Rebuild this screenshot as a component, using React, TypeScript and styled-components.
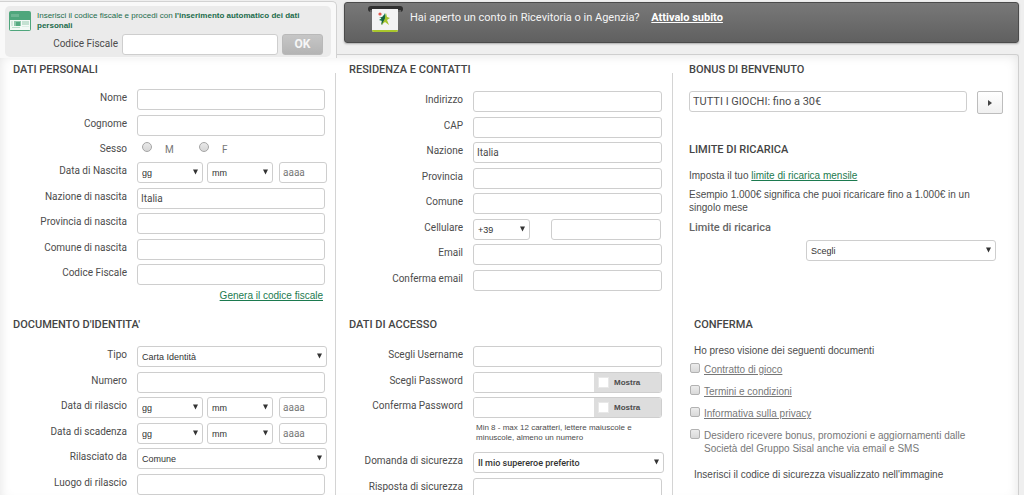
import React, { useId } from "react";
import styled, { createGlobalStyle, css } from "styled-components";

const GlobalStyle = createGlobalStyle`
  *, *::before, *::after { box-sizing: border-box; }
  html { scrollbar-width: none; }
  body {
    margin: 0;
    background: #efefef;
    color: #4c4c4c;
    font-family: Roboto, "Liberation Sans", sans-serif;
    font-size: 10px;
    line-height: 12px;
  }
  input, select, button { font-family: inherit; color: inherit; margin: 0; }
`;

const Page = styled.main`
  min-height: 100vh;
  display: flex;
  flex-direction: column;
`;

const TopBar = styled.header`
  display: grid;
  grid-template-columns: 337fr 682fr;
  align-items: start;
  padding-right: 5px;
`;

const CodeTab = styled.section`
  position: relative;
  height: 57px;
  margin: 1px 0 -4px;
  padding: 4px 5px 0;
  background: #f9f9f9;
  border: 1px solid #d2d2d2;
  border-width: 1px 1px 0 0;
  border-radius: 0 5px 0 0;
`;

const CodeBox = styled.form`
  display: grid;
  grid-template-columns: 22px 1fr;
  column-gap: 6px;
  height: 51px;
  padding: 5px 8px 0 4px;
  background: #ebebeb;
  border-radius: 5px;
`;

const CodeHint = styled.p`
  margin: 0;
  color: #1c6b4b;
  font-family: "Liberation Sans", sans-serif;
  font-size: 8px;
  line-height: 10px;
`;

const CodeLine = styled.div`
  grid-column: 1 / 3;
  display: flex;
  align-items: center;
  justify-content: flex-end;
  height: 21px;
  label { margin-right: 4px; }
`;

const OkButton = styled.button`
  width: 41px;
  height: 21px;
  margin-left: 4px;
  padding: 0;
  border: 1px solid #b9b9b9;
  border-radius: 3px;
  background: linear-gradient(#c6c6c6, #b4b4b4);
  color: #f6f6f6;
  font-size: 12px;
  font-weight: 700;
`;

const Banner = styled.aside`
  display: flex;
  align-items: flex-start;
  height: 41px;
  margin: 2px 0 0 7px;
  padding-left: 23px;
  color: #f4f4f4;
  font-size: 11px;
  line-height: 14px;
  background: linear-gradient(#787878, #606060);
  border: 1px solid #4b4b4b;
  border-radius: 3px;
  box-shadow: 0 1px 2px #aaa;
  p { margin: 8px 0 0 6px; }
  a { color: #fff; font-weight: 700; margin-left: 9px; }
`;

const Panel = styled.form`
  flex: 1;
  display: grid;
  grid-template-columns: minmax(0, 335fr) 1px minmax(0, 336fr) 1px minmax(0, 345fr);
  grid-template-rows: 255px auto;
  margin-right: 5px;
  padding-top: 8px;
  background: #fff;
  border: 1px solid #cfcfcf;
  border-width: 1px 1px 0 0;
  border-radius: 0 3px 0 0;
  box-shadow: inset 0 0 12px #e2e2e2;
`;

const Divider = styled.div<{ $column: number }>`
  grid-column: ${(p) => p.$column};
  grid-row: 1 / 3;
  margin-top: 10px;
  background: #d4d4d4;
`;

const Section = styled.section<{ $column: number; $row: number; $indent?: number }>`
  grid-column: ${(p) => p.$column};
  grid-row: ${(p) => p.$row};
  padding: 0 8px 0 ${(p) => p.$indent ?? 13}px;
`;

const Title = styled.h2<{ $gap?: number }>`
  margin: 0 0 ${(p) => p.$gap ?? 14}px;
  color: #444;
  font-size: 11px;
  font-weight: 500;
  line-height: 14px;
`;

const Fields = styled.div`
  & > :nth-child(odd) { height: 26px; }
  & > :nth-child(even) { height: 25px; }
`;

const Row = styled.div`
  display: grid;
  grid-template-columns: 114px minmax(0, 1fr);
  column-gap: 10px;
`;

const RowLabel = styled.label`
  text-align: right;
  line-height: 17px;
`;

const Controls = styled.div`
  display: flex;
  align-items: flex-start;
`;

const frame = css`
  height: 21px;
  background: #fff;
  border: 1px solid #cecece;
  border-radius: 3px;
`;

const TextBox = styled.input<{ $width?: number; $left?: number; $size?: number }>`
  ${frame}
  ${(p) => (p.$width ? `flex: 0 0 ${p.$width}px; width: ${p.$width}px;` : "flex: 1; min-width: 0; margin-right: 2px;")}
  ${(p) => p.$left && `margin-left: ${p.$left}px;`}
  padding: 0 3px;
  font-size: ${(p) => p.$size ?? 10}px;
  &::placeholder { color: #777; opacity: 1; }
`;

const SelectWrap = styled.div<{ $width?: number }>`
  position: relative;
  ${(p) => (p.$width ? `flex: 0 0 ${p.$width}px;` : "flex: 1;")}
  svg { position: absolute; right: 5px; top: 7px; pointer-events: none; }
`;

const NativeSelect = styled.select<{ $strong?: boolean }>`
  ${frame}
  display: block;
  width: 100%;
  padding: 0 14px 0 4px;
  appearance: none;
  color: #333;
  font-family: ${(p) => (p.$strong ? "Roboto" : '"Liberation Sans"')}, sans-serif;
  font-size: 9px;
  font-weight: ${(p) => (p.$strong ? 500 : 400)};
`;

const SexRow = styled(Row)`
  height: 22px;
`;

const Radio = styled.input`
  appearance: none;
  width: 10px;
  height: 10px;
  border: 1px solid #a5a5a5;
  border-radius: 50%;
  background: linear-gradient(#e9e9e9, #d6d6d6);
`;

const RadioLabel = styled.label`
  width: 47px;
  padding: 3px 0 0 13px;
  color: #777;
  line-height: 14px;
`;

const Radios = styled.div`
  display: flex;
  padding-left: 5px;
  ${Radio} { margin-top: 2px; }
`;

const GreenLink = styled.a`
  color: #1c7a4f;
`;

const GenerateLine = styled.div`
  padding-right: 4px;
  text-align: right;
  font-family: "Liberation Sans", sans-serif;
`;

const PasswordFrame = styled.div`
  ${frame}
  display: flex;
  flex: 1;
  min-width: 0;
  margin-right: 2px;
  overflow: hidden;
`;

const PasswordBox = styled.input`
  flex: 1;
  min-width: 0;
  border: 0;
  padding: 0 4px;
`;

const ShowLabel = styled.label`
  display: flex;
  align-items: center;
  flex: 0 0 67px;
  gap: 5px;
  padding-left: 4px;
  background: #ddd;
  font-family: "Liberation Sans", sans-serif;
  font-size: 8px;
  font-weight: 700;
`;

const WhiteTick = styled.input`
  appearance: none;
  width: 11px;
  height: 11px;
  background: #fff;
  border: 1px solid #e8e8e8;
`;

const PasswordHint = styled.p`
  margin: 0 0 9px 127px;
  font-family: "Liberation Sans", sans-serif;
  font-size: 8px;
  line-height: 10px;
`;

const BonusLine = styled.div`
  display: flex;
  padding-right: 7px;
  margin-bottom: 29px;
`;

const ArrowButton = styled.button`
  width: 26px;
  height: 23px;
  margin-left: 8px;
  padding: 0;
  border: 1px solid #bdbdbd;
  border-radius: 2px;
  background: linear-gradient(#fff, #f0f0f0);
  line-height: 0;
`;

const Copy = styled.p`
  margin: 0 0 6px;
  font-family: "Liberation Sans", sans-serif;
  line-height: 13px;
`;

const LimitLabel = styled.label`
  display: block;
  padding-top: 1px;
  color: #666;
  font-size: 11px;
  font-weight: 500;
  line-height: 14px;
`;

const LimitSelect = styled.div`
  display: flex;
  width: 190px;
  margin: 5px 14px 0 auto;
`;

const Consents = styled.div`
  display: grid;
  row-gap: 9px;
  margin: 0 30px 13px -4px;
`;

const Consent = styled.div`
  display: grid;
  grid-template-columns: 10px 1fr;
  column-gap: 4px;
  color: #777;
  font-family: "Liberation Sans", sans-serif;
  line-height: 13px;
  a { color: inherit; }
`;

const Tick = styled.input`
  appearance: none;
  width: 10px;
  height: 10px;
  border: 1px solid #b2b2b2;
  border-radius: 2px;
  background: linear-gradient(#ececec, #d9d9d9);
`;

const SelectGap = styled.span`
  width: 4px;
`;

function Select({ id, value, width, strong }: { id?: string; value: string; width?: number; strong?: boolean }) {
  return (
    <SelectWrap $width={width}>
      <NativeSelect id={id} $strong={strong} aria-label={id ? undefined : value}>
        <option>{value}</option>
      </NativeSelect>
      <svg width="5" height="6" viewBox="0 0 5 6" aria-hidden="true">
        <path d="M0 0.5H5L2.5 5.5Z" fill="#333" />
      </svg>
    </SelectWrap>
  );
}

function Field({ label, children }: { label: string; children?: (id: string) => React.ReactNode }) {
  const id = useId();
  return (
    <Row>
      <RowLabel htmlFor={id}>{label}</RowLabel>
      <Controls>{children ? children(id) : <TextBox id={id} />}</Controls>
    </Row>
  );
}

function DateField({ label }: { label: string }) {
  return (
    <Field label={label}>
      {(id) => (
        <>
          <Select id={id} value="gg" width={66} />
          <SelectGap />
          <Select value="mm" width={66} />
          <TextBox $width={48} $left={6} placeholder="aaaa" aria-label={`${label}, anno`} />
        </>
      )}
    </Field>
  );
}

function PasswordField({ label }: { label: string }) {
  return (
    <Field label={label}>
      {(id) => (
        <PasswordFrame>
          <PasswordBox id={id} type="password" />
          <ShowLabel>
            <WhiteTick type="checkbox" />
            Mostra
          </ShowLabel>
        </PasswordFrame>
      )}
    </Field>
  );
}

function ConsentLine({ children, link }: { children: string; link?: boolean }) {
  const id = useId();
  return (
    <Consent>
      <Tick type="checkbox" id={id} />
      <label htmlFor={id}>{link ? <a href="#documento">{children}</a> : children}</label>
    </Consent>
  );
}

function CardIcon() {
  return (
    <svg width="22" height="20" viewBox="0 0 22 20" aria-hidden="true">
      <rect x="0" y="0" width="22" height="20" rx="2" fill="#4fa67c" />
      <rect x="2" y="3" width="8" height="3" fill="#6db592" />
      <rect x="1" y="9" width="20" height="10" fill="#f3f9f6" />
      <rect x="2" y="10" width="2" height="5" fill="#d3e9de" />
      <rect x="5" y="10" width="7" height="5" fill="#8fc8ab" />
      <rect x="7" y="11" width="4" height="4" fill="#55a982" />
      <rect x="13" y="10" width="7" height="4" fill="#c4e1d2" />
      <rect x="3" y="16" width="8" height="1" fill="#b9dcca" />
      <rect x="13" y="15" width="7" height="1" fill="#dceee5" />
    </svg>
  );
}

function SlotIcon() {
  return (
    <svg width="36" height="30" viewBox="0 0 36 30" aria-hidden="true">
      <rect x="0" y="3" width="35" height="6" rx="3" fill="#2f2f2f" />
      <path d="M2 8H33" stroke="#8c8c8c" />
      <path d="M4 6H30V27Q30 29 28 29H6Q4 29 4 27Z" fill="#f3f3f3" />
      <path d="M4 27H30Q30 29 28 29H6Q4 29 4 27Z" fill="#a9c62c" />
      <path d="M11 14L15 14L17 10L18 14L20 15L17 17L14 22L14 18L11 17L14 15Z" fill="#14784a" />
      <path d="M18 10L19 14L22 15L19 17L21 22L17 19L13 22L16 17L17 14Z" fill="#a5c42d" />
      <path d="M16 12L17 15L15 19L13 22L14 17L13 15Z" fill="#14603f" />
      <circle cx="12" cy="11" r="1.6" fill="#e2564c" />
    </svg>
  );
}

export default function App() {
  return (
    <>
      <GlobalStyle />
      <Page>
        <TopBar>
          <CodeTab>
            <CodeBox>
              <CardIcon />
              <CodeHint>
                Inserisci il codice fiscale e procedi con <b>l'inserimento automatico dei dati personali</b>
              </CodeHint>
              <CodeLine>
                <label htmlFor="codice">Codice Fiscale</label>
                <TextBox id="codice" $width={156} />
                <OkButton type="button">OK</OkButton>
              </CodeLine>
            </CodeBox>
          </CodeTab>
          <Banner>
            <SlotIcon />
            <p>
              Hai aperto un conto in Ricevitoria o in Agenzia? <a href="#attiva">Attivalo subito</a>
            </p>
          </Banner>
        </TopBar>

        <Panel>
          <Divider $column={2} />
          <Divider $column={4} />

          <Section $column={1} $row={1}>
            <Title $gap={12}>DATI PERSONALI</Title>
            <Fields>
              <Field label="Nome" />
              <Field label="Cognome" />
            </Fields>
            <SexRow role="radiogroup" aria-label="Sesso">
              <RowLabel as="span">Sesso</RowLabel>
              <Radios>
                <Radio type="radio" name="sesso" id="sesso-m" />
                <RadioLabel htmlFor="sesso-m">M</RadioLabel>
                <Radio type="radio" name="sesso" id="sesso-f" />
                <RadioLabel htmlFor="sesso-f">F</RadioLabel>
              </Radios>
            </SexRow>
            <Fields>
              <DateField label="Data di Nascita" />
              <Field label="Nazione di nascita">{(id) => <TextBox id={id} defaultValue="Italia" />}</Field>
              <Field label="Provincia di nascita" />
              <Field label="Comune di nascita" />
              <Field label="Codice Fiscale" />
            </Fields>
            <GenerateLine>
              <GreenLink href="#genera">Genera il codice fiscale</GreenLink>
            </GenerateLine>
          </Section>

          <Section $column={3} $row={1}>
            <Title>RESIDENZA E CONTATTI</Title>
            <Fields>
              <Field label="Indirizzo" />
              <Field label="CAP" />
              <Field label="Nazione">{(id) => <TextBox id={id} defaultValue="Italia" />}</Field>
              <Field label="Provincia" />
              <Field label="Comune" />
              <Field label="Cellulare">
                {(id) => (
                  <>
                    <Select value="+39" width={57} />
                    <TextBox id={id} $width={110} $left={21} />
                  </>
                )}
              </Field>
              <Field label="Email" />
              <Field label="Conferma email" />
            </Fields>
          </Section>

          <Section $column={5} $row={1} $indent={16}>
            <Title>BONUS DI BENVENUTO</Title>
            <BonusLine>
              <TextBox $size={11} aria-label="Bonus di benvenuto" defaultValue="TUTTI I GIOCHI: fino a 30€" />
              <ArrowButton type="button" aria-label="Avanti">
                <svg width="4" height="6" viewBox="0 0 4 6" aria-hidden="true">
                  <path d="M0 0L4 3L0 6Z" fill="#444" />
                </svg>
              </ArrowButton>
            </BonusLine>
            <Title $gap={12}>LIMITE DI RICARICA</Title>
            <Copy>
              Imposta il tuo <GreenLink href="#limite">limite di ricarica mensile</GreenLink>
            </Copy>
            <Copy>
              Esempio 1.000€ significa che puoi ricaricare fino a 1.000€ in un
              <br />
              singolo mese
            </Copy>
            <LimitLabel htmlFor="limite">Limite di ricarica</LimitLabel>
            <LimitSelect>
              <Select id="limite" value="Scegli" />
            </LimitSelect>
          </Section>

          <Section $column={1} $row={2}>
            <Title>DOCUMENTO D'IDENTITA'</Title>
            <Fields>
              <Field label="Tipo">{(id) => <Select id={id} value="Carta Identità" />}</Field>
              <Field label="Numero" />
              <DateField label="Data di rilascio" />
              <DateField label="Data di scadenza" />
              <Field label="Rilasciato da">{(id) => <Select id={id} value="Comune" />}</Field>
              <Field label="Luogo di rilascio" />
            </Fields>
          </Section>

          <Section $column={3} $row={2}>
            <Title>DATI DI ACCESSO</Title>
            <Fields>
              <Field label="Scegli Username" />
              <PasswordField label="Scegli Password" />
              <PasswordField label="Conferma Password" />
            </Fields>
            <PasswordHint>
              Min 8 - max 12 caratteri, lettere maiuscole e<br />
              minuscole, almeno un numero
            </PasswordHint>
            <Fields>
              <Field label="Domanda di sicurezza">
                {(id) => <Select id={id} value="Il mio supereroe preferito" strong />}
              </Field>
              <Field label="Risposta di sicurezza" />
            </Fields>
          </Section>

          <Section $column={5} $row={2} $indent={21}>
            <Title $gap={12}>CONFERMA</Title>
            <Copy>Ho preso visione dei seguenti documenti</Copy>
            <Consents>
              <ConsentLine link>Contratto di gioco</ConsentLine>
              <ConsentLine link>Termini e condizioni</ConsentLine>
              <ConsentLine link>Informativa sulla privacy</ConsentLine>
              <ConsentLine>
                Desidero ricevere bonus, promozioni e aggiornamenti dalle Società del Gruppo Sisal anche via email e SMS
              </ConsentLine>
            </Consents>
            <Copy>Inserisci il codice di sicurezza visualizzato nell'immagine</Copy>
          </Section>
        </Panel>
      </Page>
    </>
  );
}
